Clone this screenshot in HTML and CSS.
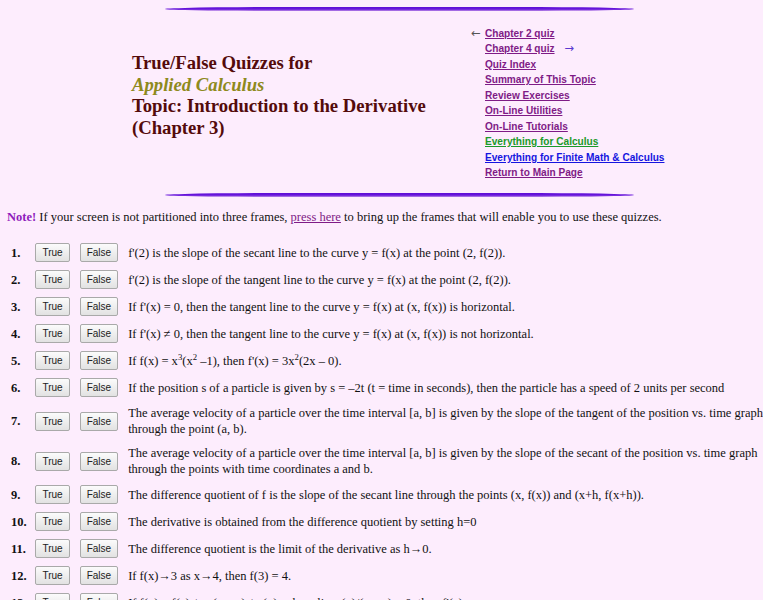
FILE: index.html
```html
<!DOCTYPE html>
<html>
<head>
<meta charset="utf-8">
<title>True/False Quizzes for Applied Calculus</title>
<link rel="stylesheet" href="styles.css">
</head>
<body>
<div class="rule rule-top"></div>
<div class="header">
  <div class="title">
    <div>True/False Quizzes for</div>
    <div class="book">Applied Calculus</div>
    <div>Topic: Introduction to the Derivative</div>
    <div>(Chapter 3)</div>
  </div>
  <ul class="links">
    <li><span class="arrow left">&larr;</span><a href="#">Chapter 2 quiz</a></li>
    <li><a href="#">Chapter 4 quiz</a><span class="arrow right">&rarr;</span></li>
    <li><a href="#">Quiz Index</a></li>
    <li><a href="#">Summary of This Topic</a></li>
    <li><a href="#">Review Exercises</a></li>
    <li><a href="#">On-Line Utilities</a></li>
    <li><a href="#">On-Line Tutorials</a></li>
    <li><a href="#" class="green">Everything for Calculus</a></li>
    <li><a href="#" class="blue">Everything for Finite Math &amp; Calculus</a></li>
    <li><a href="#">Return to Main Page</a></li>
  </ul>
</div>
<div class="rule"></div>
<p class="note"><b>Note!</b> If your screen is not partitioned into three frames, <a href="#">press here</a> to bring up the frames that will enable you to use these quizzes.</p>
<table class="quiz">
  <tr><td class="num">1.</td><td><div class="btns"><button>True</button><button>False</button></div></td><td class="q">f'(2) is the slope of the secant line to the curve y = f(x) at the point (2, f(2)).</td></tr>
  <tr><td class="num">2.</td><td><div class="btns"><button>True</button><button>False</button></div></td><td class="q">f'(2) is the slope of the tangent line to the curve y = f(x) at the point (2, f(2)).</td></tr>
  <tr><td class="num">3.</td><td><div class="btns"><button>True</button><button>False</button></div></td><td class="q">If f'(x) = 0, then the tangent line to the curve y = f(x) at (x, f(x)) is horizontal.</td></tr>
  <tr><td class="num">4.</td><td><div class="btns"><button>True</button><button>False</button></div></td><td class="q">If f'(x) &ne; 0, then the tangent line to the curve y = f(x) at (x, f(x)) is not horizontal.</td></tr>
  <tr><td class="num">5.</td><td><div class="btns"><button>True</button><button>False</button></div></td><td class="q">If f(x) = x<sup>3</sup>(x<sup>2</sup> &ndash;1), then f'(x) = 3x<sup>2</sup>(2x &ndash; 0).</td></tr>
  <tr><td class="num">6.</td><td><div class="btns"><button>True</button><button>False</button></div></td><td class="q">If the position s of a particle is given by s = &ndash;2t (t = time in seconds), then the particle has a speed of 2 units per second</td></tr>
  <tr><td class="num">7.</td><td><div class="btns"><button>True</button><button>False</button></div></td><td class="q">The average velocity of a particle over the time interval [a, b] is given by the slope of the tangent of the position vs. time graph<br>through the point (a, b).</td></tr>
  <tr><td class="num">8.</td><td><div class="btns"><button>True</button><button>False</button></div></td><td class="q">The average velocity of a particle over the time interval [a, b] is given by the slope of the secant of the position vs. time graph<br>through the points with time coordinates a and b.</td></tr>
  <tr><td class="num">9.</td><td><div class="btns"><button>True</button><button>False</button></div></td><td class="q">The difference quotient of f is the slope of the secant line through the points (x, f(x)) and (x+h, f(x+h)).</td></tr>
  <tr><td class="num">10.</td><td><div class="btns"><button>True</button><button>False</button></div></td><td class="q">The derivative is obtained from the difference quotient by setting h=0</td></tr>
  <tr><td class="num">11.</td><td><div class="btns"><button>True</button><button>False</button></div></td><td class="q">The difference quotient is the limit of the derivative as h&rarr;0.</td></tr>
  <tr><td class="num">12.</td><td><div class="btns"><button>True</button><button>False</button></div></td><td class="q">If f(x)&rarr;3 as x&rarr;4, then f(3) = 4.</td></tr>
  <tr><td class="num">13.</td><td><div class="btns"><button>True</button><button>False</button></div></td><td class="q">If f(x) = f(a) + m(x &ndash; a) + r(x), where lim r(x)/(x &ndash; a) = 0, then f'(a) = m.</td></tr>
</table>
</body>
</html>
```
FILE: styles.css
```css
html, body {
  margin: 0;
  padding: 0;
}
body {
  background: #fdedfd;
  font-family: "Liberation Serif", "Times New Roman", serif;
  font-size: 12.5px;
  color: #111;
  overflow: hidden;
}
.rule {
  width: 469px;
  height: 4px;
  margin: 0 0 0 165px;
  border-radius: 50% / 100%;
  background: linear-gradient(to bottom, #5c0cd6 0%, #6a18dc 55%, #b98ae6 100%);
}
.rule-top {
  margin-top: 7px;
}
.header {
  display: flex;
  align-items: flex-start;
  padding: 15px 0 12px 132px;
}
.title {
  width: 353px;
  margin-top: 26px;
  font-size: 18.7px;
  font-weight: bold;
  line-height: 21.5px;
  color: #540b0b;
}
.title .book {
  font-style: italic;
  color: #8e8a1d;
}
.links {
  list-style: none;
  margin: 0;
  padding: 0;
  font-family: "Liberation Sans", Arial, sans-serif;
  font-size: 10.1px;
  font-weight: bold;
  line-height: 15.45px;
}
.links li {
  position: relative;
}
.links a {
  color: #7f1b86;
}
.links a.green {
  color: #1b9a2a;
}
.links a.blue {
  color: #1515e0;
}
.arrow {
  font-family: "DejaVu Sans", sans-serif;
  font-weight: normal;
  font-size: 11.5px;
}
.arrow.left {
  position: absolute;
  left: -14px;
  top: 0;
  color: #555;
}
.arrow.right {
  margin-left: 10px;
  color: #5a3ad0;
}
.note {
  margin: 12px 0 0 7px;
  line-height: 16px;
}
.note b {
  color: #8f1cbc;
}
.note a {
  color: #7f1b86;
}
.quiz {
  border-collapse: collapse;
  margin: 14.5px 0 0 0;
}
.quiz td {
  padding: 4px 0;
  vertical-align: middle;
  line-height: 16px;
}
.quiz .num {
  width: 25px;
  padding-left: 11px;
  font-weight: bold;
}
.btns {
  display: flex;
  gap: 10px;
  padding-right: 10px;
}
.quiz .q {
  white-space: nowrap;
}
button {
  height: 19px;
  padding: 0 6px;
  margin: 0;
  font-family: "Liberation Sans", Arial, sans-serif;
  font-size: 10px;
  color: #222;
  background: linear-gradient(to bottom, #fbfbfb, #e2e2e2);
  border: 1px solid #a9a9a9;
  border-radius: 2px;
}
sup {
  font-size: 70%;
  line-height: 0;
}
```
